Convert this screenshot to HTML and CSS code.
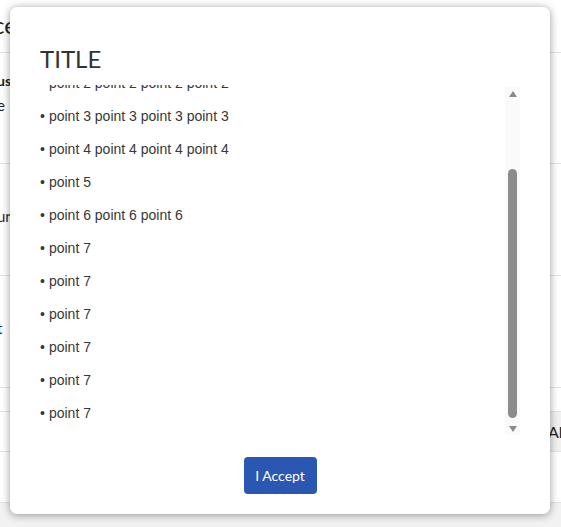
FILE: index.html
```html
<!DOCTYPE html>
<html>
<head>
<meta charset="utf-8">
<link rel="stylesheet" href="styles.css">
</head>
<body>
<div class="page">
  <div class="row head"><span class="frag big">ce</span></div>
  <div class="row r1"><span class="frag bold">us</span><span class="frag">e</span></div>
  <div class="row r2"><span class="frag navy">ur</span></div>
  <div class="row r3"><span class="frag navy">t</span></div>
  <div class="row r4"></div>
  <div class="row r5"><span class="allbtn">Al</span></div>
  <div class="row r6"></div>
  <div class="footer"></div>
</div>

<div class="modal">
  <h2 class="title">TITLE</h2>
  <div class="scroll">
    <ul class="points">
      <li>point 1 point 1 point 1</li>
      <li>point 2 point 2 point 2 point 2</li>
      <li>point 3 point 3 point 3 point 3</li>
      <li>point 4 point 4 point 4 point 4</li>
      <li>point 5</li>
      <li>point 6 point 6 point 6</li>
      <li>point 7</li>
      <li>point 7</li>
      <li>point 7</li>
      <li>point 7</li>
      <li>point 7</li>
      <li>point 7</li>
    </ul>
    <div class="track">
      <div class="arrow up"></div>
      <div class="thumb"></div>
      <div class="arrow down"></div>
    </div>
  </div>
  <div class="actions"><button class="accept">I Accept</button></div>
</div>
</body>
</html>
```
FILE: styles.css
```css
html, body {
  margin: 0;
  padding: 0;
}
body {
  width: 561px;
  height: 527px;
  overflow: hidden;
  background: #ffffff;
  font-family: Lato, "Liberation Sans", sans-serif;
  position: relative;
}
.page {
  display: flex;
  flex-direction: column;
  height: 527px;
}
.row {
  border-bottom: 1px solid #e3e3e3;
  display: flex;
  flex-direction: column;
  color: #222;
}
.frag {
  margin-left: -3px;
  font-size: 15px;
  line-height: 18px;
}
.head { height: 52px; }
.head .big {
  font-size: 24px;
  line-height: 28px;
  margin-top: 11px;
  margin-left: -7px;
}
.r1 { height: 110px; }
.r1 .bold { font-weight: 700; font-size: 14px; margin-top: 19px; }
.r1 .frag + .frag { margin-top: 6px; }
.r2 { height: 111px; }
.r2 .navy { margin-top: 43px; color: #1d2a44; }
.r3 { height: 111px; }
.r3 .navy { margin-top: 43px; color: #1d2a44; }
.r4 { height: 23px; }
.r5 {
  height: 39px;
  align-items: flex-end;
  justify-content: center;
}
.allbtn {
  width: 13px;
  height: 39px;
  background: #f1f1f1;
  line-height: 39px;
  font-size: 16px;
  padding-left: 2px;
  overflow: hidden;
  color: #222;
}
.r6 { height: 50px; }
.footer {
  flex: 1;
  background: #f2f2f2;
}

.modal {
  position: absolute;
  left: 10px;
  top: 7px;
  width: 540px;
  height: 507px;
  box-sizing: border-box;
  background: #fff;
  border-radius: 7px;
  box-shadow: 0 1px 8px rgba(0, 0, 0, 0.4);
  padding: 37px 30px 20px 30px;
  display: flex;
  flex-direction: column;
}
.title {
  margin: 0 0 12px 0;
  font-family: Lato, sans-serif;
  font-weight: 400;
  font-size: 24px;
  line-height: 29px;
  color: #333;
}
.scroll {
  height: 352px;
  display: flex;
  overflow: hidden;
}
.points {
  flex: 1;
  list-style: none;
  margin: -51px 0 0 0;
  padding: 0;
  font-family: "Liberation Sans", Arial, sans-serif;
  font-size: 14px;
  color: #383838;
}
.points li {
  height: 33px;
  line-height: 33px;
  white-space: nowrap;
}
.points li::before {
  content: "\2022";
  margin-right: 4px;
}
.track {
  width: 15px;
  height: 349px;
  margin-top: 1px;
  background: #fafafa;
  display: flex;
  flex-direction: column;
  align-items: center;
}
.arrow {
  width: 0;
  height: 0;
  border-left: 4.5px solid transparent;
  border-right: 4.5px solid transparent;
}
.arrow.up {
  margin-top: 5px;
  border-bottom: 6px solid #8a8a8a;
}
.arrow.down {
  margin-top: 8px;
  border-top: 6px solid #8a8a8a;
}
.thumb {
  width: 9px;
  height: 249px;
  margin-top: 72px;
  background: #8c8c8c;
  border-radius: 4.5px;
}
.actions {
  margin-top: 20px;
  display: flex;
  justify-content: center;
}
.accept {
  width: 73px;
  height: 37px;
  border: none;
  border-radius: 4px;
  background: #2957b1;
  color: #fff;
  font-family: Lato, sans-serif;
  font-size: 14px;
  padding: 0;
}
```
